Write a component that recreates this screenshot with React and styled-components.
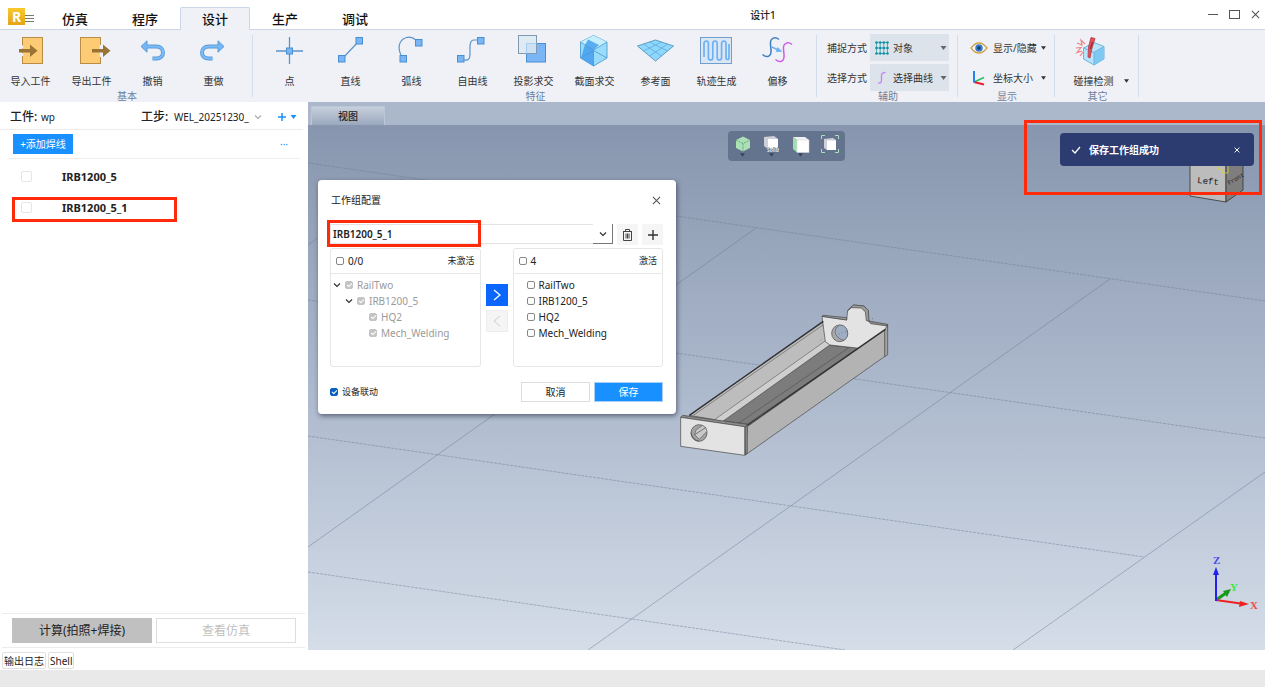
import React, {useState} from 'react';
import styled, {createGlobalStyle} from "styled-components";

const GlobalStyle = createGlobalStyle`
  * {
    box-sizing: border-box;
  }

  body {
    margin: 0;
    font-family: "Noto Sans", "Noto Sans CJK SC", sans-serif;
    font-size: 10px;
    line-height: 16px;
    color: #222;
    background-color: #fff;
  }

  button, select, input {
    font: inherit;
    color: inherit;
    margin: 0;
    padding: 0;
  }

  button {
    cursor: pointer;
  }

  svg {
    display: block;
  }
`;

/* ---------- icons ---------- */
const blue = {fill: "#7ab6f5", stroke: "#4a8fd0"}

const ImportIcon = () => (
    <svg width="40" height="34" viewBox="0 0 40 34">
        <rect x="11.5" y="3.5" width="20" height="26" fill="#fdcb73" stroke="#b98d45"/>
        <path d="M11.5 11.500v3M11.500 19v3" stroke="#eff1f6" strokeWidth="1.500"/>
        <path d="M8 15h11v-4.500l7.500 6.300-7.500 6.200V18.500H8z" fill="#9a7434"/>
    </svg>
)
const ExportIcon = () => (
    <svg width="40" height="34" viewBox="0 0 40 34">
        <rect x="8.500" y="3.500" width="20" height="26" fill="#fdcb73" stroke="#b98d45"/>
        <path d="M28.500 11v12" stroke="#eff1f6" strokeWidth="1.500"/>
        <path d="M20 15h11v-4.500l7.500 6.300-7.500 6.200V18.500H20z" fill="#9a7434"/>
    </svg>
)
const undoBody = "M13 12.500H23C28 12.500 30 15.500 30 18.500C30 22 27.500 24.500 23.500 24.500H19.500"
const Undo = () => (
    <>
        <path d={undoBody} fill="none" stroke="#5b9bd8" strokeWidth="4"/>
        <path d="M8 12.500L14 6.800V18.200z" fill="#74b5f5" stroke="#5b9bd8"/>
        <path d={undoBody} fill="none" stroke="#7dbcf8" strokeWidth="2.200"/>
    </>
)
const UndoIcon = () => <svg width="40" height="34" viewBox="0 0 40 34"><Undo/></svg>
const RedoIcon = () => (
    <svg width="40" height="34" viewBox="0 0 40 34">
        <g transform="translate(38 0) scale(-1 1)"><Undo/></g>
    </svg>
)
const PointIcon = () => (
    <svg width="40" height="34" viewBox="0 0 40 34">
        <path d="M19.500 3v27M6 17h27" stroke="#5b93cc" strokeWidth="1.300"/>
        <rect x="16.500" y="14" width="6" height="6" {...blue}/>
    </svg>
)
const LineIcon = () => (
    <svg width="40" height="34" viewBox="0 0 40 34">
        <path d="M11 25L28 7" stroke="#5b93cc" strokeWidth="1.200"/>
        <rect x="25" y="3.500" width="6.500" height="6.500" {...blue}/>
        <rect x="7.500" y="21.500" width="6.500" height="6.500" {...blue}/>
    </svg>
)
const ArcIcon = () => (
    <svg width="40" height="34" viewBox="0 0 40 34">
        <path d="M9.500 22C5 14 7 6 14 3.800C17 2.600 21 3.500 24 6" fill="none" stroke="#5b93cc" strokeWidth="1.200"/>
        <rect x="23.500" y="5.500" width="6.500" height="6.500" {...blue}/>
        <rect x="8" y="21.500" width="6.500" height="6.500" {...blue}/>
    </svg>
)
const FreeIcon = () => (
    <svg width="40" height="34" viewBox="0 0 40 34">
        <path d="M11 26C16 27 17 24 17 20C17 14 16 6 21 6H25" fill="none" stroke="#5b93cc" strokeWidth="1.200"/>
        <rect x="24.500" y="3.500" width="6.500" height="6.500" {...blue}/>
        <rect x="4.500" y="21.500" width="6.500" height="6.500" {...blue}/>
    </svg>
)
const ProjectIcon = () => (
    <svg width="40" height="34" viewBox="0 0 40 34">
        <rect x="12.500" y="9.500" width="19" height="18.500" {...blue}/>
        <rect x="4.500" y="1.500" width="18" height="18" fill="#dbe9f3" fillOpacity=".85" stroke="#8299ad"/>
        <path d="M12.500 19.500v-10h10" fill="none" stroke="#a9cdee"/>
    </svg>
)
const SectionIcon = () => (
    <svg width="40" height="34" viewBox="0 0 40 34">
        <path d="M18.500 1.500L32 8V24L18.500 32L5.500 24V8z" fill="#9adcfb" stroke="#5aa5d6"/>
        <path d="M18.500 1.500L32 8L18.500 16L5.500 8z" fill="#c5effd"/>
        <path d="M13 5.500L24 11L18.500 16V32L6 24L9.500 12z" fill="#3f9bee" fillOpacity=".8"/>
        <path d="M5.500 8L18.500 16L32 8M18.500 16V32M5.500 24L18.500 16.500L32 24" fill="none" stroke="#4f97cc"
              strokeWidth=".8"/>
    </svg>
)
const PlaneIcon = () => (
    <svg width="40" height="34" viewBox="0 0 40 34">
        <path d="M19.500 6L37.500 12L19.500 27L1.500 12z" fill="#8fd8fc" stroke="#5c9cc6"/>
        <path d="M7.500 10L25.500 22M13.500 8L31.500 17M31.500 10L13.500 22M25.500 8L7.500 17" stroke="#5fb2e6" strokeWidth=".9"/>
    </svg>
)
const TrackIcon = () => (
    <svg width="40" height="34" viewBox="0 0 40 34">
        <rect x="3.500" y="3.500" width="31" height="26" fill="#dbe7f2" stroke="#6f9fcf"/>
        <path
            d="M7 23V9.500a2.200 2.500 0 0 1 4.400 0V23.500a2.200 2.500 0 0 0 4.400 0V9.500a2.200 2.500 0 0 1 4.400 0V23.500a2.200 2.500 0 0 0 4.400 0V9.500a2.200 2.500 0 0 1 4.400 0V23.500a1.500 2 0 0 0 3 0V10"
            fill="none" stroke="#6fb1f5" strokeWidth="1.700"/>
    </svg>
)
const OffsetIcon = () => (
    <svg width="40" height="34" viewBox="0 0 40 34">
        <path d="M4.500 20.500C8 23.500 12.500 23.500 13 18C13.500 13 11 8 13.500 5.500C15.500 3.500 18.500 3.500 21 5.500" fill="none"
              stroke="#3d7fbf" strokeWidth="1.500"/>
        <path d="M17.500 25.500C21 28.500 25.500 28.500 26 23C26.500 18 24 13 26.500 10.500C28.500 8.500 31.500 8.500 34 10.500" fill="none"
              stroke="#d05be8" strokeWidth="1.500"/>
        <path d="M14 13L20 16" stroke="#6fb1f5" strokeWidth="1.400"/>
        <path d="M19.500 13L24.500 17.800L17.800 18z" fill="#6fb1f5"/>
    </svg>
)
const CollisionIcon = () => (
    <svg width="40" height="34" viewBox="0 0 40 34">
        <path d="M20 8.500L30 12.500V25L20 31L9.500 25V14z" fill="#b5e4fb" stroke="#6db3dc"/>
        <path d="M20 18.500L30 12.500V25L20 31z" fill="#7fc8f2"/>
        <path d="M9.500 14L20 18.500L30 12.500M20 18.500V31" fill="none" stroke="#6db3dc"/>
        <path d="M3 9l5 2-1-5 4 4M2 14l5-.500-4 5 5-1.500M6 22l3-4" fill="none" stroke="#ee8289" strokeWidth="1.200"/>
        <path d="M17 3.500L21 4.500L18 14L16 24L14 23L14.500 13z" fill="#e2505a" stroke="#b93742" strokeWidth=".8"/>
        <path d="M18.500 8L16.500 15" stroke="#9b2b37" strokeWidth="1.200"/>
    </svg>
)
const SnapIcon = () => (
    <svg width="14" height="14" viewBox="0 0 14 14">
        <path d="M1.500 1v12M5.200 1v12M8.800 1v12M12.500 1v12M1 1.500h12M1 7h12M1 12.500h12" stroke="#3fa7b4" strokeWidth=".9"/>
        {[1.5, 5.2, 8.8, 12.5].map(x => [1.5, 7, 12.5].map(y => (
            <circle key={x + "-" + y} cx={x} cy={y} r="1.300" fill="#0f93a3"/>
        )))}
    </svg>
)
const CurveIcon = () => (
    <svg width="14" height="14" viewBox="0 0 14 14">
        <path d="M3 12C6 12.500 6.500 11.500 6.500 8.500V4.500C6.500 2 7.500 1.500 10.500 1.500" fill="none" stroke="#c58af0"
              strokeWidth="1.400"/>
    </svg>
)
const EyeIcon = () => (
    <svg width="18" height="14" viewBox="0 0 18 14">
        <path d="M1 7Q9-3 17 7Q9 17 1 7z" fill="#fff" stroke="#d0a14a" strokeWidth="1.300"/>
        <circle cx="9" cy="7" r="3.800" fill="#3a7bc8"/>
        <circle cx="9" cy="7" r="1.700" fill="#123a78"/>
    </svg>
)
const AxesIcon = () => (
    <svg width="18" height="16" viewBox="0 0 18 16">
        <path d="M4 12L14 7.500" stroke="#27c26a" strokeWidth="1.800"/>
        <path d="M4 12L14 14.500" stroke="#ee1c2e" strokeWidth="2"/>
        <path d="M4 1V12.500" stroke="#1f86f2" strokeWidth="2"/>
    </svg>
)
const Caret = ({color = "#333", size = 5}) => (
    <svg width={size} height="4" viewBox="0 0 6 4">
        <path d="M0 0h6L3 4z" fill={color}/>
    </svg>
)
const Chevron = ({color = "#333"}) => (
    <svg width="8" height="6" viewBox="0 0 8 6">
        <path d="M1 1.500L4 4.500L7 1.500" fill="none" stroke={color} strokeWidth="1.200"/>
    </svg>
)
const Cross = ({size = 9, color = "#555", width = 1.2}) => (
    <svg width={size} height={size} viewBox="0 0 10 10">
        <path d="M1 1L9 9M9 1L1 9" stroke={color} strokeWidth={width}/>
    </svg>
)

/* ---------- data ---------- */
const menus = ["仿真", "程序", "设计", "生产", "调试"]
const basicTools = [
    {name: "导入工件", icon: ImportIcon},
    {name: "导出工件", icon: ExportIcon},
    {name: "撤销", icon: UndoIcon},
    {name: "重做", icon: RedoIcon},
]
const featureTools = [
    {name: "点", icon: PointIcon},
    {name: "直线", icon: LineIcon},
    {name: "弧线", icon: ArcIcon},
    {name: "自由线", icon: FreeIcon},
    {name: "投影求交", icon: ProjectIcon},
    {name: "截面求交", icon: SectionIcon},
    {name: "参考面", icon: PlaneIcon},
    {name: "轨迹生成", icon: TrackIcon},
    {name: "偏移", icon: OffsetIcon},
]
const tree = [
    {name: "RailTwo", level: 0, open: true},
    {name: "IRB1200_5", level: 1, open: true},
    {name: "HQ2", level: 2},
    {name: "Mech_Welding", level: 2},
]

/* ---------- scene ---------- */
const Scene = () => (
    <SceneSvg viewBox="308 125 957 525" preserveAspectRatio="xMidYMid slice" aria-hidden="true">
        <g stroke="#6b7a90" strokeOpacity=".6" strokeWidth=".8" fill="none">
            <path d="M308 163L1265 301M308 300L1265 438M308 436L1144 557M308 572L845 650" strokeDasharray="3 1"/>
            <path d="M308 245L403 178M308 547L756 228M588 650L1110 279M1013 650L1265 472"/>
        </g>

        <g transform="translate(660 290) scale(.33333)" stroke="#444" strokeWidth="2" strokeLinejoin="round">
            <path d="M88 376L488 95L505 155L180 392z" fill="#bdbdbd"/>
            <path d="M165 388L497 152L520 165L195 396z" fill="#cfcfcf" stroke="none"/>
            <path d="M190 393L508 166L598 174L262 402z" fill="#7c7c7c"/>
            <path d="M165 388L497 152M100 376L490 104M235 400L568 172" fill="none" strokeWidth="1.500"/>
            <path d="M486 79L560 90L563 62L580 45L612 48L625 62L626 92L634 98L682 104V122L598 175L510 165L496 155z"
                  fill="#e3e3e3"/>
            <path d="M486 79L560 90V83L490 76zM563 62L580 45L612 48L625 62L627 94L619 92L616 66L604 54L574 53z"
                  fill="#9b9b9b"/>
            <path d="M626 93L682 103V108L632 101z" fill="#8e8e8e"/>
            <ellipse cx="539" cy="130" rx="24" ry="25" fill="#a8a8a8"/>
            <path d="M539 105A24 25 0 0 1 552 151Q528 145 525 125Q527 110 539 105z" fill="#9eadc4" strokeWidth="1.500"/>
            <path d="M545 128h2M555 125h2M536 132h2M636 86h2M482 150h2" strokeWidth="2"/>
            <path d="M262 410L676 118V198L256 495z" fill="#b3b3b3"/>
            <path d="M674 120L683 104V194L674 200z" fill="#a2a2a2"/>
            <path d="M262 406L676 118" strokeWidth="4" stroke="#333"/>
            <path d="M88 376L490 94" strokeWidth="4" stroke="#333"/>
            <path d="M62 382L68 376L262 403L256 411z" fill="#8c8c8c"/>
            <path d="M256 411L262 403V488L256 495z" fill="#8c8c8c"/>
            <path d="M62 382L254 410V496L62 469z" fill="#e3e3e3"/>
            <ellipse cx="117" cy="429" rx="24" ry="25" fill="#a3a3a3"/>
            <path d="M108 420L128 406Q142 414 141 424L118 448L104 434z" fill="#c9c9c9" strokeWidth="1.500"/>
            <path d="M93 428Q96 448 117 454M104 434L138 412" fill="none" strokeWidth="2"/>
        </g>

        <g stroke="#333" strokeWidth=".8">
            <path d="M1190 145H1226V202L1190 196z" fill="#bcbcbc"/>
            <path d="M1226 145H1243V190L1226 202z" fill="#7e7e7e"/>
            <path d="M1218 166V169H1222V173H1228V166" fill="none" stroke="#d9d334"/>
        </g>
        <CubeText x="1197" y="183" fill="#111" transform="rotate(5 1197 183)" $size={9}>Left</CubeText>
        <CubeText x="1229" y="185" fill="#222" transform="rotate(-30 1229 185)" $size={6}>Front</CubeText>

        <path d="M1216 600L1226 593" stroke="#179a17" strokeWidth="3"/>
        <path d="M1223 591L1231 589L1227 597z" fill="#179a17"/>
        <path d="M1216 600L1244 604" stroke="#ee2222" strokeWidth="2"/>
        <path d="M1240 601L1249 604L1239 607z" fill="#ee2222"/>
        <path d="M1216 601V572" stroke="#2222ee" strokeWidth="2"/>
        <path d="M1213 575L1216 567L1219 575z" fill="#2222ee"/>
        <AxisText x="1213" y="564" fill="#4a4af0">Z</AxisText>
        <AxisText x="1230" y="591" fill="#3bea3b">Y</AxisText>
        <AxisText x="1250" y="609" fill="#f04a4a">X</AxisText>
    </SceneSvg>
)

const TitleBar = () => (
    <Title>
        <Logo aria-hidden="true">R</Logo>
        <MenuButton aria-label="菜单">
            <svg width="9" height="9" viewBox="0 0 9 9">
                <path d="M0 1.500h9M0 4.500h9M0 7.500h9" stroke="#777" strokeWidth="1.200"/>
            </svg>
        </MenuButton>
        <nav>
            {menus.map(m => <MenuTab key={m} $active={m === "设计"}>{m}</MenuTab>)}
        </nav>
        <h1>设计1</h1>
        <WindowButtons>
            <button aria-label="最小化">
                <svg width="11" height="11" viewBox="0 0 11 11"><path d="M0 5.500h10" stroke="#555"/></svg>
            </button>
            <button aria-label="最大化">
                <svg width="11" height="11" viewBox="0 0 11 11">
                    <rect x=".5" y="1.500" width="10" height="8" fill="none" stroke="#555"/>
                </svg>
            </button>
            <button aria-label="关闭"><Cross/></button>
        </WindowButtons>
    </Title>
)

const Ribbon = () => (
    <RibbonBar>
        <Group>
            <ToolRow>
                {basicTools.map(({name, icon: Icon}) => <Tool key={name}><Icon/>{name}</Tool>)}
            </ToolRow>
            <GroupName>基本</GroupName>
        </Group>
        <Group>
            <ToolRow $pad={6}>
                {featureTools.map(({name, icon: Icon}) => <Tool key={name}><Icon/>{name}</Tool>)}
            </ToolRow>
            <GroupName>特征</GroupName>
        </Group>
        <Group>
            <Options>
                <label htmlFor="snap">捕捉方式</label>
                <OptionBox>
                    <SnapIcon/>
                    <select id="snap"><option>对象</option></select>
                    <Caret color="#666" size={7}/>
                </OptionBox>
                <label htmlFor="pick">选择方式</label>
                <OptionBox>
                    <CurveIcon/>
                    <select id="pick"><option>选择曲线</option></select>
                    <Caret color="#666" size={7}/>
                </OptionBox>
            </Options>
            <GroupName>辅助</GroupName>
        </Group>
        <Group>
            <DisplayList>
                <button><EyeIcon/><span>显示/隐藏</span><Caret/></button>
                <button><AxesIcon/><span>坐标大小</span><Caret/></button>
            </DisplayList>
            <GroupName>显示</GroupName>
        </Group>
        <Group>
            <ToolRow $pad={8}>
                <Tool><CollisionIcon/><span>碰撞检测</span></Tool>
                <DropButton aria-label="碰撞检测选项"><Caret/></DropButton>
            </ToolRow>
            <GroupName>其它</GroupName>
        </Group>
    </RibbonBar>
)

const SidePanel = () => (
    <Side>
        <StepRow>
            <b>工件:</b>
            <span>wp</span>
            <label htmlFor="step">工步:</label>
            <select id="step"><option>WEL_20251230_</option></select>
            <Chevron color="#aaa"/>
            <button aria-label="添加工步">
                <svg width="8" height="8" viewBox="0 0 8 8">
                    <path d="M4 0v8M0 4h8" stroke="#1890ff" strokeWidth="1.500"/>
                </svg>
                <Caret color="#1890ff" size={7}/>
            </button>
        </StepRow>
        <AddRow>
            <button>+添加焊线</button>
            <a href="#more" aria-label="更多">···</a>
        </AddRow>
        <WeldList>
            <li><Check type="checkbox" id="w1" $size={11} $line="#e6e6e6"/><label htmlFor="w1">IRB1200_5</label></li>
            <li>
                <Check type="checkbox" id="w2" $size={11} $line="#e6e6e6"/><label htmlFor="w2">IRB1200_5_1</label>
                <WeldMark/>
            </li>
        </WeldList>
        <RunRow>
            <RunButton $main>计算(拍照+焊接)</RunButton>
            <RunButton disabled>查看仿真</RunButton>
        </RunRow>
    </Side>
)

const GroupDialog = () => {
    const [linked, setLinked] = useState(true)
    return (
        <Dialog role="dialog" aria-labelledby="dialog-title">
            <DialogHead>
                <h2 id="dialog-title">工作组配置</h2>
                <button aria-label="关闭"><Cross/></button>
            </DialogHead>
            <ComboRow>
                <Combo>
                    <select aria-label="工作组"><option>IRB1200_5_1</option></select>
                    <span><Chevron/></span>
                </Combo>
                <SquareButton aria-label="删除">
                    <svg width="11" height="12" viewBox="0 0 11 12" fill="none" stroke="#444">
                        <path d="M1 2.500h9M3.500 2.500V.500h4v2M1.500 2.500v9h8v-9M4 4.500v5M5.500 4.500v5M7 4.500v5"/>
                    </svg>
                </SquareButton>
                <SquareButton aria-label="新增">
                    <svg width="10" height="10" viewBox="0 0 10 10">
                        <path d="M5 0v10M0 5h10" stroke="#333" strokeWidth="1.400"/>
                    </svg>
                </SquareButton>
                <ComboMark/>
            </ComboRow>
            <Transfer>
                <Box>
                    <BoxHead>
                        <Check type="checkbox" id="all-left" $size={8}/>
                        <label htmlFor="all-left">0/0</label>
                        <small>未激活</small>
                    </BoxHead>
                    <ul>
                        {tree.map(n => (
                            <TreeItem key={n.name} $level={n.level}>
                                <i>{n.open && <Chevron/>}</i>
                                <Check type="checkbox" id={"l-" + n.name} $size={8} $line="#c4c4c4" $fill="#c4c4c4"
                                       defaultChecked disabled/>
                                <label htmlFor={"l-" + n.name}>{n.name}</label>
                            </TreeItem>
                        ))}
                    </ul>
                </Box>
                <Arrows>
                    <ArrowButton $on aria-label="激活">
                        <svg width="8" height="14" viewBox="0 0 8 14">
                            <path d="M1 2L7 7L1 12" fill="none" stroke="#fff" strokeWidth="1.300"/>
                        </svg>
                    </ArrowButton>
                    <ArrowButton disabled aria-label="取消激活">
                        <svg width="8" height="14" viewBox="0 0 8 14">
                            <path d="M7 2L1 7L7 12" fill="none" stroke="#ccc"/>
                        </svg>
                    </ArrowButton>
                </Arrows>
                <Box>
                    <BoxHead>
                        <Check type="checkbox" id="all-right" $size={8}/>
                        <label htmlFor="all-right">4</label>
                        <small>激活</small>
                    </BoxHead>
                    <ul>
                        {tree.map(n => (
                            <ActiveItem key={n.name}>
                                <Check type="checkbox" id={"r-" + n.name} $size={8}/>
                                <label htmlFor={"r-" + n.name}>{n.name}</label>
                            </ActiveItem>
                        ))}
                    </ul>
                </Box>
            </Transfer>
            <DialogFoot>
                <Check type="checkbox" id="linked" $size={8} $line="#0a5fc0" $fill="#0a5fc0" checked={linked}
                       onChange={e => setLinked(e.target.checked)}/>
                <label htmlFor="linked">设备联动</label>
                <FootButton>取消</FootButton>
                <FootButton $main>保存</FootButton>
            </DialogFoot>
        </Dialog>
    )
}

const ViewTools = () => (
    <ViewBar>
        <button aria-label="视角">
            <svg width="18" height="18" viewBox="0 0 18 18">
                <path d="M9 1.500L16 5V13L9 16.500L2 13V5z" fill="#a9e0b5"/>
                <path d="M2 5L9 8.500L16 5M9 8.500V16.500" fill="none" stroke="#5f8f70" strokeDasharray="2 1" strokeWidth=".8"/>
            </svg>
            <Caret color="#39435a"/>
        </button>
        <button aria-label="显示模式">
            <svg width="18" height="18" viewBox="0 0 18 18">
                <path d="M1 2L11 1L15 4V14H5L1 11z" fill="#cdd0d6"/>
                <rect x="5" y="4" width="10" height="10" fill="#fff"/>
                <text x="4" y="17" fontSize="5" fontWeight="700" fill="#dfe5ee" stroke="#5c6a84" strokeWidth="1"
                      paintOrder="stroke">Solid
                </text>
            </svg>
            <Caret color="#39435a"/>
        </button>
        <button aria-label="剖切">
            <svg width="18" height="18" viewBox="0 0 18 18">
                <path d="M1 2L13 2L17 5H5z" fill="#f1f1f1"/>
                <path d="M1 2L5 5V17.500L1 14z" fill="#9fe0ae"/>
                <rect x="5" y="5" width="12" height="12.500" fill="#fff" stroke="#d4d7dd" strokeWidth=".5"/>
            </svg>
            <Caret color="#39435a"/>
        </button>
        <button aria-label="适应窗口">
            <svg width="18" height="18" viewBox="0 0 18 18">
                <path d="M.500 4V.500H4M14 .500H17.500V4M17.500 14V17.500H14M4 17.500H.500V14" fill="none" stroke="#a9e0b5"/>
                <path d="M3 4L12 3L15 5V15H6L3 13z" fill="#cdd0d6"/>
                <rect x="6" y="5.500" width="9" height="9.500" fill="#fff"/>
            </svg>
        </button>
    </ViewBar>
)

const App = () => (
    <>
        <GlobalStyle/>
        <Page>
            <TitleBar/>
            <Ribbon/>
            <Workspace>
                <SidePanel/>
                <Main>
                    <ViewTabs><button>视图</button></ViewTabs>
                    <Viewport>
                        <Scene/>
                        <ViewTools/>
                        <GroupDialog/>
                        <Toast role="status">
                            <svg width="10" height="8" viewBox="0 0 10 8">
                                <path d="M1 4L4 7L9 1" fill="none" stroke="#fff" strokeWidth="1.200"/>
                            </svg>
                            <b>保存工作组成功</b>
                            <button aria-label="关闭"><Cross size={6} color="#fff" width={1.6}/></button>
                        </Toast>
                        <ToastMark/>
                    </Viewport>
                </Main>
            </Workspace>
            <OutputTabs>
                <button>输出日志</button>
                <button>Shell</button>
            </OutputTabs>
            <StatusBar/>
        </Page>
    </>
)

/* ---------- page ---------- */
const Page = styled.div`
  display: flex;
  flex-direction: column;
  min-height: 100vh;
`;

const Title = styled.header`
  display: flex;
  align-items: flex-end;
  height: 30px;
  padding-left: 8px;
  background-color: #fff;
  border-bottom: 1px solid #cbd7e6;

  nav {
    display: flex;
    align-self: flex-end;
    margin: 0 0 -1px 5px;
  }

  h1 {
    flex: 1;
    align-self: center;
    margin: 0;
    font-size: 10px;
    font-weight: 500;
    text-align: center;
  }
`;

const Logo = styled.div`
  width: 17px;
  height: 17px;
  margin-bottom: 4px;
  background: linear-gradient(#f8c92c, #e6a414);
  color: #fff;
  font-size: 14px;
  font-weight: 700;
  line-height: 17px;
  text-align: center;
`;

const MenuButton = styled.button`
  width: 10px;
  height: 9px;
  margin-bottom: 6px;
  border: 0;
  background: none;
`;

const MenuTab = styled.button`
  width: 70px;
  height: 23px;
  border: 1px solid ${p => p.$active ? "#cbd7e6" : "transparent"};
  border-bottom: 0;
  border-radius: 2px 2px 0 0;
  background-color: ${p => p.$active ? "#eff1f6" : "transparent"};
  color: #111;
  font-size: 13px;
  font-weight: 500;
  line-height: 22px;
`;

const WindowButtons = styled.div`
  display: flex;
  align-self: center;
  gap: 10px;
  padding: 0 4px 0 72px;

  button {
    display: flex;
    width: 11px;
    height: 11px;
    align-items: center;
    justify-content: center;
    border: 0;
    background: none;
  }
`;

/* ---------- ribbon ---------- */
const RibbonBar = styled.div`
  display: flex;
  height: 72px;
  background-color: #eff1f6;
  color: #333;
`;

const Group = styled.section`
  position: relative;
  display: flex;
  flex-direction: column;
  justify-content: space-between;
  padding: 4px 9px 0 0;

  &::after {
    content: "";
    position: absolute;
    right: 0;
    top: 5px;
    bottom: 5px;
    width: 1px;
    background-color: #d3deea;
  }
`;

const GroupName = styled.span`
  height: 11px;
  padding-left: 10px;
  line-height: 11px;
  color: #6c7f9c;
  text-align: center;
`;

const ToolRow = styled.div`
  display: flex;
  padding-left: ${p => p.$pad || 0}px;
`;

const Tool = styled.button`
  display: flex;
  flex-direction: column;
  align-items: center;
  gap: 5px;
  width: 61px;
  border: 0;
  background: none;
  white-space: nowrap;
`;

const DropButton = styled.button`
  display: flex;
  align-items: flex-end;
  width: 6px;
  padding-bottom: 6px;
  border: 0;
  background: none;
`;

const Options = styled.div`
  display: grid;
  grid-template-columns: 40px 79px;
  gap: 3px;
  align-items: center;
  padding-left: 10px;
`;

const OptionBox = styled.div`
  display: flex;
  align-items: center;
  gap: 4px;
  height: 27px;
  padding: 0 2px 0 5px;
  background-color: #dce3eb;

  select {
    appearance: none;
    flex: 1;
    min-width: 0;
    border: 0;
    background: none;
  }
`;

const DisplayList = styled.div`
  display: flex;
  flex-direction: column;
  gap: 3px;
  padding-left: 12px;

  button {
    display: flex;
    align-items: center;
    gap: 5px;
    height: 27px;
    border: 0;
    background: none;
    text-align: left;
  }

  span {
    width: 43px;
    white-space: nowrap;
  }
`;

/* ---------- left panel ---------- */
const Workspace = styled.div`
  display: flex;
  flex: 1;
`;

const Side = styled.aside`
  display: flex;
  flex-direction: column;
  flex: 0 0 308px;
  background-color: #fff;
  color: #222;
`;

const StepRow = styled.div`
  display: flex;
  align-items: center;
  height: 28px;
  margin-right: 5px;
  padding: 2px 0 0 10px;
  border-bottom: 1px solid #ececec;

  b, label {
    width: 31px;
    font-size: 12px;
    font-weight: 500;
    white-space: nowrap;
  }

  span {
    width: 100px;
  }

  select {
    appearance: none;
    width: 80px;
    margin-left: 2px;
    border: 0;
    background: none;
  }

  button {
    display: flex;
    align-items: center;
    gap: 4px;
    margin-left: 16px;
    border: 0;
    background: none;
  }
`;

const AddRow = styled.div`
  display: flex;
  align-items: center;
  justify-content: space-between;
  height: 29px;
  margin: 0 8px;
  padding: 0 12px 0 5px;
  border-bottom: 1px solid #efefef;

  button {
    width: 60px;
    height: 20px;
    border: 0;
    background-color: #1890ff;
    color: #fff;
  }

  a {
    color: #1890ff;
    text-decoration: none;
  }
`;

const Check = styled.input`
  appearance: none;
  position: relative;
  flex: none;
  width: ${p => p.$size}px;
  height: ${p => p.$size}px;
  border: 1px solid ${p => p.$line || "#888"};
  border-radius: 2px;
  background-color: #fff;

  &:checked {
    background-color: ${p => p.$fill || "#1890ff"};
  }

  &:checked::after {
    content: "";
    position: absolute;
    left: 2px;
    top: 0;
    width: 2px;
    height: 4px;
    border: solid #fff;
    border-width: 0 1px 1px 0;
    transform: rotate(45deg);
  }
`;

const WeldList = styled.ul`
  flex: 1;
  margin: 0;
  padding: 2px 0 0;
  list-style: none;

  li {
    position: relative;
    display: flex;
    align-items: center;
    gap: 30px;
    height: 31px;
    padding-left: 21px;
    font-size: 11px;
    font-weight: 700;
  }
`;

const Mark = styled.div`
  position: absolute;
  border: 3px solid #ff2a0a;
  pointer-events: none;
`;

const WeldMark = styled(Mark)`
  left: 12px;
  top: 5px;
  width: 165px;
  height: 25px;
`;

const RunRow = styled.div`
  display: flex;
  gap: 4px;
  margin: 0 3px 2px 2px;
  padding: 4px 9px 4px 10px;
  border: solid #ececec;
  border-width: 1px 0;
`;

const RunButton = styled.button`
  flex: 1;
  height: 25px;
  border: 1px solid ${p => p.$main ? "#c0c0c0" : "#dedede"};
  background-color: ${p => p.$main ? "#c0c0c0" : "#fff"};
  color: ${p => p.$main ? "#222" : "#c0c0c0"};
  font-size: 12px;
`;

/* ---------- view ---------- */
const Main = styled.main`
  display: flex;
  flex: 1;
  flex-direction: column;
  min-width: 0;
`;

const ViewTabs = styled.div`
  height: 23px;
  padding: 4px 3px 0;
  background-color: #abb8cc;

  button {
    width: 74px;
    height: 19px;
    border: 1px solid #bcc8d8;
    border-bottom: 0;
    background: linear-gradient(#c6cfdc, #9ba8bd);
    font-weight: 500;
  }
`;

const Viewport = styled.div`
  position: relative;
  flex: 1;
  background: linear-gradient(#8796ae, #acb8cc 50%, #d4dde8);
`;

const SceneSvg = styled.svg`
  position: absolute;
  inset: 0;
  width: 100%;
  height: 100%;
`;

const CubeText = styled.text`
  font-family: "Liberation Mono", monospace;
  font-size: ${p => p.$size}px;
`;

const AxisText = styled.text`
  font-family: "Liberation Serif", serif;
  font-size: 11px;
  font-weight: 700;
`;

const ViewBar = styled.div`
  position: absolute;
  top: 6px;
  left: 50%;
  display: flex;
  gap: 11px;
  height: 30px;
  margin-left: -59px;
  padding: 4px 6px 0;
  border-radius: 4px;
  background-color: #65748e;

  button {
    display: flex;
    flex-direction: column;
    align-items: center;
    border: 0;
    background: none;
  }
`;

const Toast = styled.div`
  position: absolute;
  top: 8px;
  right: 11px;
  display: flex;
  align-items: center;
  gap: 8px;
  width: 194px;
  height: 33px;
  padding: 0 12px 0 11px;
  border-radius: 4px;
  background-color: #2c3b70;
  color: #fff;

  b {
    flex: 1;
  }

  button {
    padding: 2px;
    border: 0;
    background: none;
  }
`;

const ToastMark = styled(Mark)`
  top: -5px;
  right: 3px;
  width: 238px;
  height: 75px;
`;

/* ---------- dialog ---------- */
const Dialog = styled.div`
  position: absolute;
  left: 10px;
  top: 55px;
  width: 358px;
  padding: 12px 13px 12px 12px;
  border-radius: 4px;
  background-color: #fff;
  box-shadow: 1px 2px 5px rgba(30, 40, 60, .6);

  ul {
    margin: 0;
    padding: 3px 0;
    list-style: none;
  }
`;

const DialogHead = styled.div`
  display: flex;
  align-items: center;
  justify-content: space-between;
  height: 16px;
  padding: 0 2px 0 1px;

  h2 {
    margin: 0;
    font-size: 10px;
    font-weight: 400;
  }

  button {
    border: 0;
    background: none;
  }
`;

const ComboRow = styled.div`
  position: relative;
  display: flex;
  gap: 4px;
  margin-top: 16px;
`;

const Combo = styled.div`
  display: flex;
  flex: 1;
  height: 20px;

  select {
    appearance: none;
    flex: 1;
    padding-left: 2px;
    border: 1px solid #e3e3e3;
    border-right: 0;
    background: none;
    font-weight: 600;
  }

  span {
    display: flex;
    align-items: center;
    justify-content: center;
    width: 20px;
    border: solid #777;
    border-width: 0 1px 1px 0;
  }
`;

const SquareButton = styled.button`
  display: flex;
  align-items: center;
  justify-content: center;
  width: 21px;
  height: 21px;
  border: 0;
  background-color: #f5f5f5;
`;

const ComboMark = styled(Mark)`
  left: -3px;
  top: -4px;
  width: 154px;
  height: 27px;
`;

const Transfer = styled.div`
  display: flex;
  align-items: center;
  gap: 5px;
  margin-top: 3px;
`;

const Box = styled.div`
  flex: 1;
  height: 119px;
  border: 1px solid #e6e6e6;
  border-radius: 3px;
`;

const BoxHead = styled.div`
  display: flex;
  align-items: center;
  gap: 4px;
  height: 25px;
  padding: 0 5px;
  border-bottom: 1px solid #e6e6e6;

  small {
    flex: 1;
    font-size: 9px;
    text-align: right;
  }
`;

const TreeItem = styled.li`
  display: flex;
  align-items: center;
  gap: 4px;
  height: 16px;
  padding-left: ${p => 2 + p.$level * 12}px;
  color: #9a9a9a;

  i {
    width: 8px;
  }
`;

const ActiveItem = styled.li`
  display: flex;
  align-items: center;
  gap: 4px;
  height: 16px;
  padding-left: 13px;
`;

const Arrows = styled.div`
  display: flex;
  flex-direction: column;
  gap: 4px;
`;

const ArrowButton = styled.button`
  display: flex;
  align-items: center;
  justify-content: center;
  width: 22px;
  height: 22px;
  border: ${p => p.$on ? 0 : "1px solid #eee"};
  background-color: ${p => p.$on ? "#0a66ff" : "#f5f5f5"};
`;

const DialogFoot = styled.div`
  display: flex;
  align-items: center;
  gap: 4px;
  margin-top: 15px;

  label {
    flex: 1;
    font-size: 9px;
  }
`;

const FootButton = styled.button`
  width: 69px;
  height: 20px;
  border: 1px solid ${p => p.$main ? "#a9cff5" : "#dcdcdc"};
  background-color: ${p => p.$main ? "#1890ff" : "#fff"};
  color: ${p => p.$main ? "#fff" : "#222"};
`;

/* ---------- bottom ---------- */
const OutputTabs = styled.div`
  display: flex;
  gap: 2px;
  height: 20px;
  padding: 2px;
  background-color: #fff;

  button {
    height: 17px;
    padding: 0 1px;
    border: 1px solid #e0e0e0;
    border-radius: 2px;
    background-color: #fff;
    line-height: 14px;
  }
`;

const StatusBar = styled.footer`
  height: 17px;
  background-color: #e9e9e9;
`;

export default App;
